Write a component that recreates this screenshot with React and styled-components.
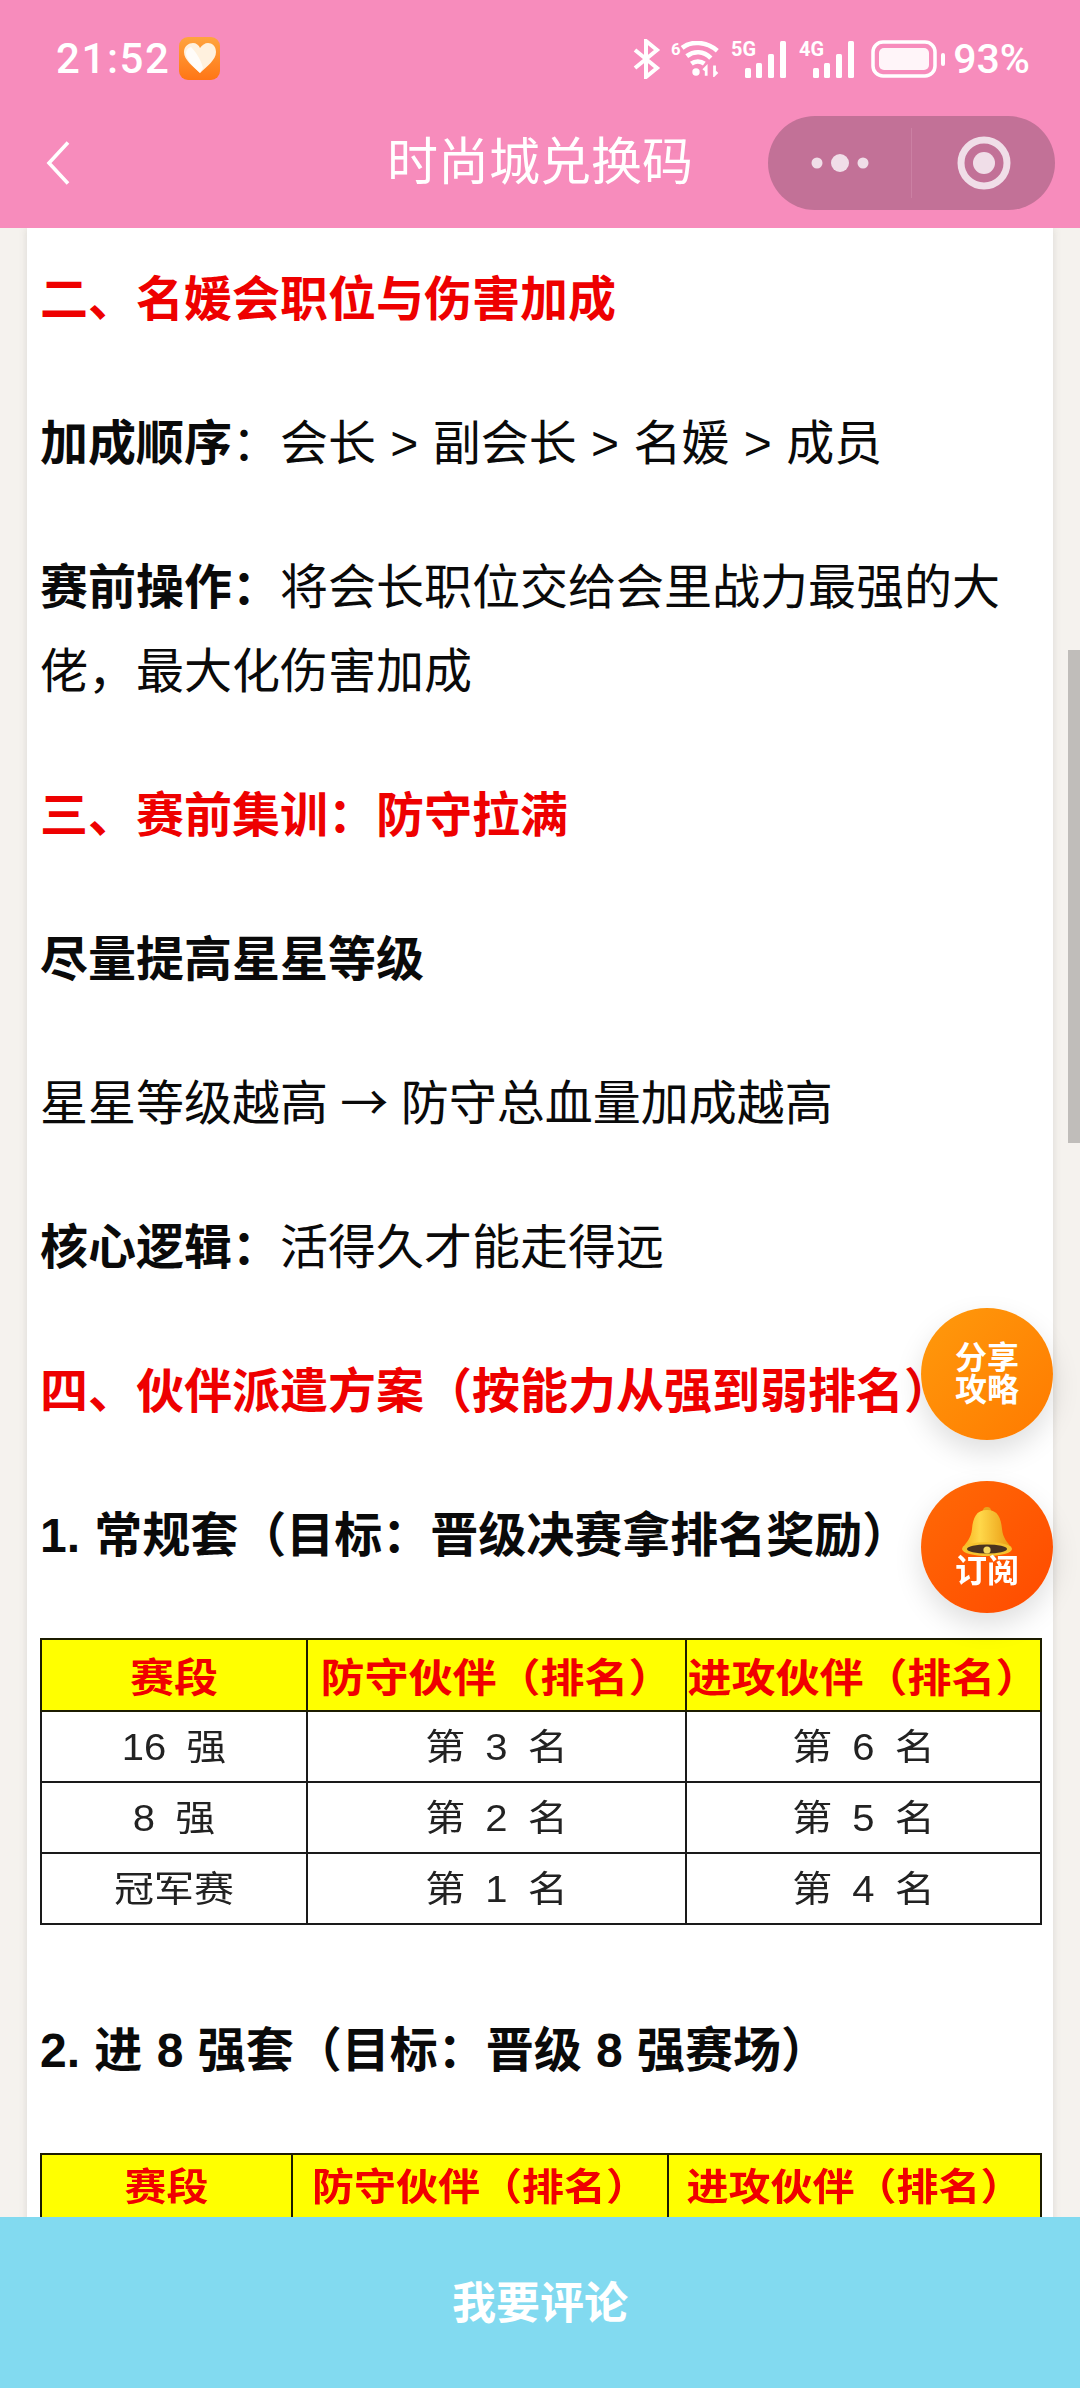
import React from "react";
import styled, { createGlobalStyle } from "styled-components";

const GlobalStyle = createGlobalStyle`
  html, body {
    margin: 0;
    padding: 0;
    background: #f5f2ee;
  }
`;

const Page = styled.div`
  position: relative;
  width: 1080px;
  height: 2388px;
  overflow: hidden;
  display: flex;
  flex-direction: column;
  background: #f5f2ee;
  font-family: "Liberation Sans", "Noto Sans CJK SC", sans-serif;
`;

const Header = styled.header`
  flex: 0 0 228px;
  background: #f78cbc;
  color: #fff;
`;

const StatusBar = styled.div`
  height: 78px;
  padding: 20px 50px 0 56px;
  display: flex;
  align-items: center;
  justify-content: space-between;
`;

const Cluster = styled.div`
  display: flex;
  align-items: center;
  gap: ${p => p.$gap || 0}px;
`;

const Time = styled.span`
  font-family: Roboto, sans-serif;
  font-size: 42px;
  font-weight: 500;
  letter-spacing: 1.6px;
  line-height: 48px;
`;

const Percent = styled.span`
  font-family: Roboto, sans-serif;
  font-size: 41px;
  font-weight: 500;
  line-height: 48px;
  margin-left: -4px;
`;

const NavBar = styled.div`
  height: 130px;
  padding: 0 25px;
  display: grid;
  grid-template-columns: 1fr auto 1fr;
  align-items: center;
`;

const BackButton = styled.div`
  padding-left: 21px;
  display: flex;
`;

const Title = styled.h1`
  margin: 0;
  font-size: 51px;
  font-weight: 400;
  line-height: 60px;
`;

const Capsule = styled.div`
  justify-self: end;
  width: 287px;
  height: 94px;
  border-radius: 47px;
  background: #c27197;
  display: flex;
  align-items: center;
`;

const CapsulePart = styled.div`
  flex: 1;
  height: 70px;
  display: flex;
  align-items: center;
  justify-content: center;
  border-left: ${p => (p.$divided ? "1px solid #cb80a3" : "none")};
`;

const Main = styled.main`
  flex: 1;
  min-height: 0;
  overflow: hidden;
  padding: 0 27px;
`;

const Card = styled.article`
  background: #fff;
  padding: 30px 13px;
  box-shadow: 0 0 8px rgba(90, 90, 70, 0.16);
`;

const Paragraph = styled.p`
  margin: 0 0 60px;
  font-size: 48px;
  line-height: 84px;
  word-spacing: 1px;
  color: ${p => p.$color || "#0a0a0a"};
  font-weight: ${p => (p.$bold ? 700 : 400)};
`;

const Strong = styled.strong`
  font-weight: 700;
`;

const Arrow = styled.span`
  font-family: "Noto Sans CJK SC", sans-serif;
  line-height: 0;
  margin: 0 -2px;
`;

const Table = styled.table`
  width: 1000px;
  margin-bottom: ${p => p.$after}px;
  border-collapse: collapse;
  table-layout: fixed;
  filter: blur(0.5px);
`;

const Col = styled.col`
  width: ${p => p.$width}px;
`;

const HeadCell = styled.th`
  box-sizing: border-box;
  padding: ${p => p.$padding};
  height: 72px;
  background: #ffff00;
  border: 2px solid #1c1c00;
  color: #f00000;
  font-size: ${p => p.$size}px;
  font-weight: 700;
  line-height: 44px;
  white-space: nowrap;
  text-align: center;
`;

const BodyCell = styled.td`
  box-sizing: border-box;
  padding: 0;
  height: 71px;
  border: 2px solid #1a1a1a;
  color: #222;
  font-size: 40px;
  line-height: 42px;
  word-spacing: 9px;
  text-align: center;
  white-space: nowrap;
`;

const CellLabel = styled.span`
  display: inline-block;
  transform: scaleY(0.9);
`;

const FloatButton = styled.button`
  position: absolute;
  right: 27px;
  top: ${p => p.$top}px;
  width: 132px;
  height: 132px;
  padding: 0;
  border: 0;
  border-radius: 50%;
  background: ${p => p.$bg};
  box-shadow: 0 12px 28px rgba(0, 0, 0, 0.13);
  color: #fff;
  font-family: inherit;
  font-size: 32px;
  font-weight: 700;
  line-height: 32px;
  display: flex;
  flex-direction: column;
  align-items: center;
  justify-content: center;
`;

const ScrollThumb = styled.div`
  position: absolute;
  right: 0;
  top: 650px;
  width: 12px;
  height: 493px;
  background: #c0bdba;
`;

const Footer = styled.footer`
  flex: 0 0 171px;
  box-sizing: border-box;
  padding-bottom: 6px;
  background: #82daf0;
  color: #fff;
  display: flex;
  align-items: center;
  justify-content: center;
  font-size: 44px;
  font-weight: 700;
`;

const HeartBadge = () => (
  <svg width="42" height="44" viewBox="0 0 42 44" style={{ marginLeft: 8 }}>
    <defs>
      <linearGradient id="badge" x1="0" y1="0" x2="0" y2="1">
        <stop offset="0" stopColor="#ffa43e" />
        <stop offset="1" stopColor="#ff7616" />
      </linearGradient>
    </defs>
    <rect width="41" height="43" rx="9" fill="url(#badge)" />
    <path d="M21 36 C14 29 5 23 5 15 C5 9 10 6 14 6 C17 6 20 8 21 11 C23 8 26 6 29 6 C33 6 37 9 37 15 C37 23 28 29 21 36Z" fill="#fff1de" />
    <path d="M12 10 C16 14 22 22 24 31 L21 36 C15 30 8 24 7 17 C7 13 9 11 12 10Z" fill="#fff" opacity="0.8" />
  </svg>
);

const Bluetooth = () => (
  <svg width="28" height="40" viewBox="0 0 28 40" fill="none" stroke="#fff" strokeWidth="4">
    <path d="M2 11 L24 29 L13 38 V2 L24 11 L2 29" />
  </svg>
);

const Wifi = () => (
  <svg width="50" height="36" viewBox="0 0 54 38">
    <text x="0" y="15" fontSize="18" fontWeight="700" fontFamily="Roboto" fill="#fff">6</text>
    <g fill="none" stroke="#fff" strokeWidth="5" strokeLinecap="butt">
      <path d="M12 7 C22 -1 38 0 50 10" />
      <path d="M17 16 C25 10 35 10 43 18" />
      <path d="M22 24 C26 21 32 21 36 24" />
    </g>
    <circle cx="27" cy="33" r="4" fill="#fff" />
    <path d="M38 37 V28 L35 31 M47 26 V36 L50 33" fill="none" stroke="#fff" strokeWidth="3" />
  </svg>
);

const Signal = ({ label }) => (
  <svg width="58" height="42" viewBox="0 -4 58 42" style={{ marginTop: -4 }}>
    <text x="0" y="16" fontSize="20" fontWeight="700" fontFamily="Roboto" fill="#fff" textLength="25" lengthAdjust="spacingAndGlyphs">{label}</text>
    <rect x="14" y="28" width="6" height="10" rx="1.5" fill="#fff" />
    <rect x="25" y="23" width="6" height="15" rx="1.5" fill="#fff" />
    <rect x="37" y="14" width="6" height="24" rx="1.5" fill="#fff" />
    <rect x="49" y="1" width="6" height="37" rx="1.5" fill="#fff" />
  </svg>
);

const Battery = () => (
  <svg width="76" height="38" viewBox="0 0 76 38" style={{ marginLeft: 4 }}>
    <rect x="2" y="2" width="62" height="34" rx="10" fill="none" stroke="#fff" strokeWidth="3.5" />
    <rect x="8" y="8" width="50" height="22" rx="5" fill="#fff5f9" />
    <rect x="70" y="13" width="4" height="13" rx="2" fill="#fff" />
  </svg>
);

const BackIcon = () => (
  <svg width="24" height="44" viewBox="0 0 24 44" fill="none" stroke="#fff" strokeWidth="3.6">
    <path d="M22 1.5 L3 22 L22 42.5" />
  </svg>
);

const MoreIcon = () => (
  <svg width="58" height="20" viewBox="0 0 58 20" fill="#f0dee8">
    <circle cx="6" cy="10" r="5.5" />
    <circle cx="29" cy="10" r="9" />
    <circle cx="52" cy="10" r="5.5" />
  </svg>
);

const TargetIcon = () => (
  <svg width="54" height="54" viewBox="0 0 54 54">
    <circle cx="27" cy="27" r="23" fill="none" stroke="#f0dee8" strokeWidth="7" />
    <circle cx="27" cy="27" r="11" fill="#f0dee8" />
  </svg>
);

const BellIcon = () => (
  <svg width="50" height="50" viewBox="0 0 50 50" style={{ marginBottom: -2 }}>
    <defs>
      <linearGradient id="bell" x1="0" y1="0" x2="1" y2="0">
        <stop offset="0" stopColor="#f7b21f" />
        <stop offset="0.35" stopColor="#ffd84a" />
        <stop offset="1" stopColor="#e99a12" />
      </linearGradient>
    </defs>
    <circle cx="25" cy="4" r="4" fill="#e8a41e" />
    <path d="M25 3 C14 3 11 11 10 22 C9 31 5 35 1 40 H49 C45 35 41 31 40 22 C39 11 36 3 25 3Z" fill="url(#bell)" />
    <ellipse cx="25" cy="42" rx="25" ry="7" fill="#f5c22f" />
    <ellipse cx="25" cy="42" rx="20" ry="4.6" fill="#4a3320" />
    <circle cx="25" cy="43" r="3.6" fill="#f4d860" />
  </svg>
);

const tables = [
  {
    cols: [266, 379, 355],
    after: 84,
    size: 44,
    headPadding: "8px 0 0",
    rows: [
      ["16 强", "第 3 名", "第 6 名"],
      ["8 强", "第 2 名", "第 5 名"],
      ["冠军赛", "第 1 名", "第 4 名"]
    ]
  },
  { cols: [251, 376, 373], after: 0, size: 42, headPadding: "0 0 6px", rows: [] }
];

const heads = ["赛段", "防守伙伴（排名）", "进攻伙伴（排名）"];

const RankTable = ({ cols, after, size, headPadding, rows }) => (
  <Table $after={after}>
    <colgroup>
      {cols.map((w, i) => (
        <Col key={i} $width={w} />
      ))}
    </colgroup>
    <thead>
      <tr>
        {heads.map(h => (
          <HeadCell key={h} $size={size} $padding={headPadding}>
            <CellLabel>{h}</CellLabel>
          </HeadCell>
        ))}
      </tr>
    </thead>
    <tbody>
      {rows.map(row => (
        <tr key={row[0]}>
          {row.map(cell => (
            <BodyCell key={cell}>
              <CellLabel>{cell}</CellLabel>
            </BodyCell>
          ))}
        </tr>
      ))}
    </tbody>
  </Table>
);

export default function App() {
  return (
    <Page>
      <GlobalStyle />
      <Header>
        <StatusBar>
          <Cluster>
            <Time>21:52</Time>
            <HeartBadge />
          </Cluster>
          <Cluster $gap={10}>
            <Bluetooth />
            <Wifi />
            <Signal label="5G" />
            <Signal label="4G" />
            <Battery />
            <Percent>93%</Percent>
          </Cluster>
        </StatusBar>
        <NavBar>
          <BackButton>
            <BackIcon />
          </BackButton>
          <Title>时尚城兑换码</Title>
          <Capsule>
            <CapsulePart>
              <MoreIcon />
            </CapsulePart>
            <CapsulePart $divided>
              <TargetIcon />
            </CapsulePart>
          </Capsule>
        </NavBar>
      </Header>
      <Main>
        <Card>
          <Paragraph $bold $color="#ee0000">二、名媛会职位与伤害加成</Paragraph>
          <Paragraph>
            <Strong>加成顺序</Strong>：会长 &gt; 副会长 &gt; 名媛 &gt; 成员
          </Paragraph>
          <Paragraph>
            <Strong>赛前操作：</Strong>将会长职位交给会里战力最强的大佬，最大化伤害加成
          </Paragraph>
          <Paragraph $bold $color="#ee0000">三、赛前集训：防守拉满</Paragraph>
          <Paragraph $bold>尽量提高星星等级</Paragraph>
          <Paragraph>
            星星等级越高 <Arrow>→</Arrow> 防守总血量加成越高
          </Paragraph>
          <Paragraph>
            <Strong>核心逻辑：</Strong>活得久才能走得远
          </Paragraph>
          <Paragraph $bold $color="#ee0000">四、伙伴派遣方案（按能力从强到弱排名）</Paragraph>
          <Paragraph $bold>1. 常规套（目标：晋级决赛拿排名奖励）</Paragraph>
          <RankTable {...tables[0]} />
          <Paragraph $bold>2. 进 8 强套（目标：晋级 8 强赛场）</Paragraph>
          <RankTable {...tables[1]} />
        </Card>
      </Main>
      <Footer>我要评论</Footer>
      <ScrollThumb />
      <FloatButton $top={1308} $bg="linear-gradient(135deg, #ff9a0c, #ff7a00)">
        <span>分享</span>
        <span>攻略</span>
      </FloatButton>
      <FloatButton $top={1481} $bg="linear-gradient(135deg, #ff6a06, #ff4a00)">
        <BellIcon />
        <span>订阅</span>
      </FloatButton>
    </Page>
  );
}
